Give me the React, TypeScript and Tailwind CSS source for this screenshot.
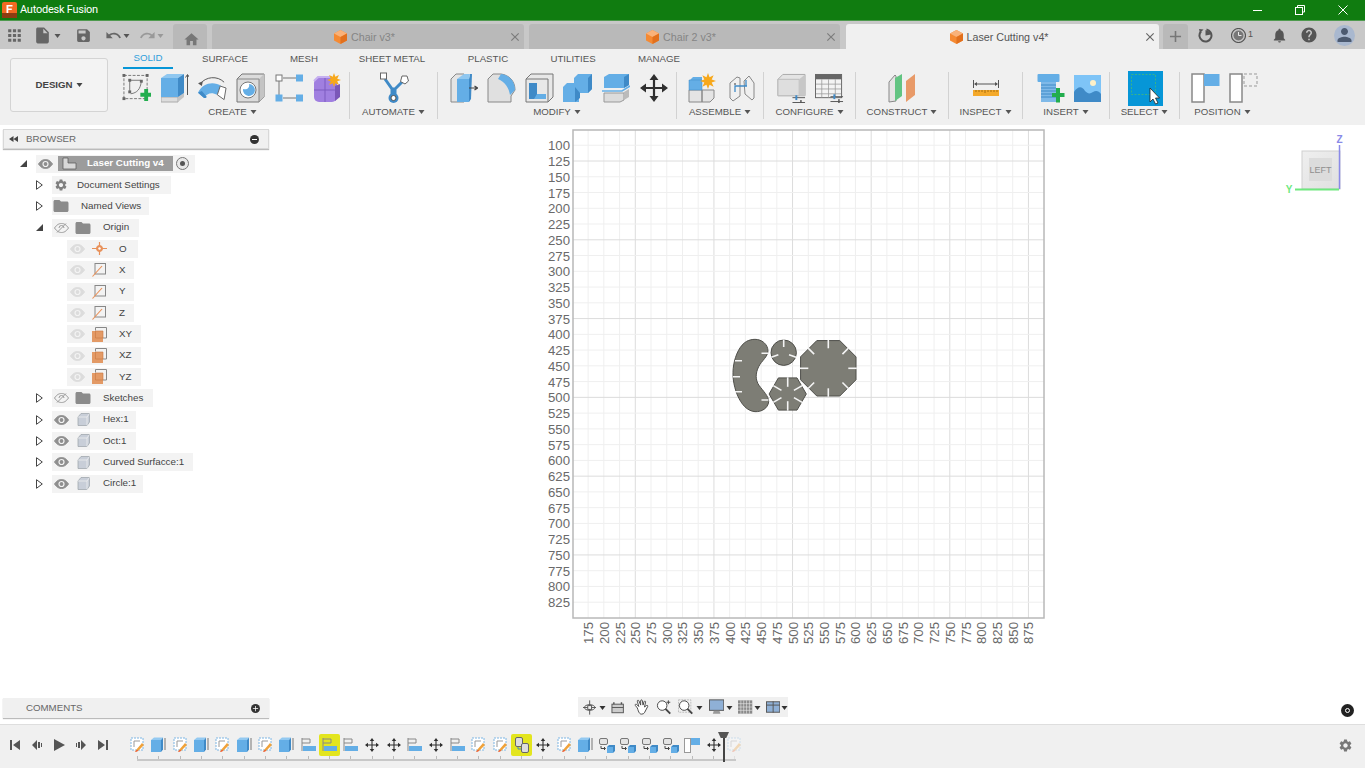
import React from 'react';
import {
  MdApps, MdInsertDriveFile, MdSave, MdUndo, MdRedo, MdHome, MdClose, MdAdd, MdNotifications,
  MdHelp, MdSettings, MdFolder, MdPerson,
} from 'react-icons/md';

const BLUE = '#64aee6';
const DARK = '#3f8ac7';
const FONT = "font-['Liberation_Sans',Arial,sans-serif]";

function Caret({ color = '#555' }: { color?: string }) {
  return (
    <svg width="7" height="4" viewBox="0 0 7 4" className="inline-block">
      <path d="M0.5 0h6L3.5 4z" fill={color} />
    </svg>
  );
}

/* ---------- ribbon icons ---------- */

function SketchIcon() {
  return (
    <svg width="30" height="32" viewBox="0 0 30 32">
      <rect x="2" y="3" width="24" height="24" fill="none" stroke="#777" strokeDasharray="3 1.5" />
      <path d="M8 8v11h0M8 8h11M9 22C16 21 19 17 20 9" fill="none" stroke="#777" />
      {[[2, 3], [26, 3], [2, 27], [20, 9], [8, 8], [8, 20]].map(([x, y]) => (
        <rect key={`${x}-${y}`} x={x - 1.5} y={y - 1.5} width="3" height="3" fill="#666" />
      ))}
      <path d="M19 21h4v-4h4v4h3.5v4H27v4.5h-4V25h-4z" fill="#22ad4e" />
    </svg>
  );
}
function ExtrudeIcon() {
  return (
    <svg width="28" height="30" viewBox="0 0 28 30">
      <path d="M0 24h17v5H0z" fill="#ddd" stroke="#aaa" />
      <path d="M17 24l6-4v4l-6 5z" fill="#c4c4c4" />
      <path d="M0 5h17v19H0z" fill={BLUE} />
      <path d="M0 5l6-4h17l-6 4z" fill="#8fc7f0" />
      <path d="M17 5l6-4v19l-6 4z" fill={DARK} />
      <path d="M26.5 22V2M24.5 4.5l2-3 2 3" fill="none" stroke="#555" />
    </svg>
  );
}
function RevolveIcon() {
  return (
    <svg width="30" height="30" viewBox="0 0 30 30">
      <path d="M2 11C8 3 20 2 27 9" fill="none" stroke="#555" />
      <path d="M0 10l5-2-1 5z" fill="#555" />
      <path d="M0 20C5 9 17 8 24 13l-4 9C14 19 10 20 6 25z" fill={BLUE} />
      <path d="M0 20l6 5c1 1 3 0 3-1l-5-6z" fill={DARK} />
      <path d="M23 13l6 2-2 12-7-5z" fill="#fff" stroke="#666" />
    </svg>
  );
}
function HoleIcon() {
  return (
    <svg width="29" height="30" viewBox="0 0 29 30">
      <path d="M1 6l5-5h22v23l-5 5H1z" fill="#dcdcdc" stroke="#777" />
      <path d="M23 6l5-5v23l-5 5z" fill="#c4c4c4" />
      <path d="M1 6h22v23" fill="none" stroke="#888" />
      <circle cx="12" cy="17" r="8" fill="#fff" stroke="#777" />
      <path d="M7 16a6 6 0 1 0 6-5c1 4-2 6-6 5z" fill={BLUE} />
    </svg>
  );
}
function BoxIcon() {
  return (
    <svg width="28" height="30" viewBox="0 0 28 30">
      <path d="M8 5h13M8 25h13M4 8v14" stroke="#777" />
      <rect x="1" y="2" width="6" height="6" fill="#fff" stroke="#777" />
      <rect x="21" y="1.5" width="7" height="7" fill={BLUE} />
      <rect x="0.5" y="21.5" width="7" height="7" fill={BLUE} />
      <rect x="21" y="21.5" width="7" height="7" fill={BLUE} />
    </svg>
  );
}
function Star({ x, y, r = 7 }: { x: number; y: number; r?: number }) {
  const pts = Array.from({ length: 16 }, (_, i) => {
    const a = (i * Math.PI) / 8;
    const d = i % 2 ? r * 0.5 : r;
    return `${x + d * Math.cos(a)},${y + d * Math.sin(a)}`;
  }).join(' ');
  return <polygon points={pts} fill="#f7a81b" />;
}
function PurpleIcon() {
  return (
    <svg width="28" height="30" viewBox="0 0 28 30">
      <rect x="1" y="5" width="23" height="24" rx="5" fill="#a07fe0" />
      <path d="M1 17h23M12 5v24" stroke="#7d5cc0" />
      <path d="M1 8l4-4h14" fill="none" stroke="#c6b0f0" strokeWidth="2" />
      <path d="M22 13l5-2v13l-5 4z" fill="#7a57b8" />
      <Star x={21} y={7} />
    </svg>
  );
}
function AutomateIcon() {
  return (
    <svg width="30" height="32" viewBox="0 0 30 32">
      <path d="M6 7l7 10v7M24 9l-8 8v7M13 17h3" fill="none" stroke={DARK} strokeWidth="3" />
      <rect x="1.5" y="1" width="6" height="6" fill="#fff" stroke="#666" />
      <path d="M23 4l5 0 1.5 5-3.5 3-4.5-2.5z" fill="#fff" stroke="#666" />
      <circle cx="14.5" cy="26" r="5" fill={DARK} />
      <circle cx="14.5" cy="26" r="2.5" fill="#fff" stroke="#555" />
    </svg>
  );
}
function PressPullIcon() {
  return (
    <svg width="28" height="30" viewBox="0 0 28 30">
      <path d="M1 29V6l5-5h8v28z" fill="#e4e4e4" stroke="#888" />
      <path d="M7 6h13l-1 23H7z" fill={BLUE} />
      <path d="M20 1l-1 5v23l2-3 1-25z" fill={DARK} />
      <path d="M7 6l7-5h6l-1 5z" fill="#8fc7f0" />
      <path d="M19 15h8M24.5 13l3 2-3 2" fill="none" stroke="#444" strokeWidth="1.2" />
    </svg>
  );
}
function FilletIcon() {
  return (
    <svg width="29" height="30" viewBox="0 0 29 30">
      <path d="M1 29V6l5-5h8c8 1 14 7 14 16l-4 6v6z" fill="#e0e0e0" stroke="#888" />
      <path d="M14 1c8 1 14 7 14 16l-5 5C22 15 18 9 11 6z" fill={BLUE} />
    </svg>
  );
}
function ChamferIcon() {
  return (
    <svg width="29" height="30" viewBox="0 0 29 30">
      <path d="M1 6l5-5h22v23l-5 5H1z" fill="#e8e8e8" stroke="#777" />
      <path d="M1 6h22v23" fill="none" stroke="#777" />
      <path d="M4 10h8v11h9v5H4z" fill={DARK} />
      <path d="M12 21l-3 5h12v-5z" fill={BLUE} />
    </svg>
  );
}
function CombineIcon() {
  return (
    <svg width="29" height="30" viewBox="0 0 29 30">
      <path d="M0 14l4-4h12v19H0z" fill={BLUE} />
      <path d="M11 5l4-4h14v15l-4 4H11z" fill={BLUE} />
      <path d="M25 5l4-4v15l-4 4z" fill={DARK} />
      <path d="M12 14v15l5-4v-5" fill={DARK} />
    </svg>
  );
}
function SplitIcon() {
  return (
    <svg width="28" height="30" viewBox="0 0 28 30">
      <path d="M2 4l5-3h20v11l-5 3H2z" fill={BLUE} />
      <path d="M22 4l5-3v11l-5 3z" fill={DARK} />
      <path d="M0 18h20l8-5" fill="none" stroke={BLUE} strokeWidth="1.5" />
      <path d="M2 20h20v7l-4 2H2z" fill="#dcdcdc" stroke="#999" />
      <path d="M22 19l5-3v8l-5 3z" fill="#bbb" />
    </svg>
  );
}
function MoveIcon({ size = 28, color = '#2f2f2f' }: { size?: number; color?: string }) {
  return (
    <svg width={size} height={size} viewBox="0 0 28 28">
      <path d="M14 4v20M4 14h20" stroke={color} strokeWidth="2.2" />
      <path d="M14 0l4.5 6h-9zM14 28l4.5-6h-9zM0 14l6-4.5v9zM28 14l-6-4.5v9z" fill={color} />
    </svg>
  );
}
function NewComponentIcon() {
  return (
    <svg width="28" height="30" viewBox="0 0 28 30">
      <path d="M1 17h13v12H1zM14 17h12v8l-4 4h-8z" fill="#e4e4e4" stroke="#888" />
      <path d="M1 8l4-4h9v13H1z" fill={BLUE} />
      <path d="M1 7h13v10H1z" fill={BLUE} stroke={DARK} strokeWidth="0.5" />
      <Star x={20} y={8} r={8} />
    </svg>
  );
}
function JointIcon() {
  return (
    <svg width="26" height="28" viewBox="0 0 26 28">
      <path d="M1 9l7-6 3 1v18l-7 5-3-3z" fill="#f0f0f0" stroke="#888" />
      <path d="M15 7l5-5 5 7v15l-2 2-7-6z" fill="#f0f0f0" stroke="#888" />
      <path d="M6 18v-6h12M17 6v6" fill="none" stroke={DARK} strokeWidth="1.3" />
      <circle cx="6" cy="10" r="1" fill="#777" />
    </svg>
  );
}
function ParamSlider() {
  return (
    <g stroke="#555">
      <path d="M0 0h13M0 5h13" />
      <rect x="3" y="-2.5" width="2" height="5" fill={DARK} stroke="none" />
      <rect x="8" y="2.5" width="1.5" height="5" fill="#555" stroke="none" />
    </g>
  );
}
function ConfigIcon() {
  return (
    <svg width="30" height="30" viewBox="0 0 30 30">
      <path d="M1 6l5-5h23v22H1z" fill="#e4e4e4" stroke="#aaa" />
      <path d="M1 6h22v17H1z" fill="#dedede" stroke="#bbb" />
      <path d="M23 6l6-5v22h-6z" fill="#c7c7c7" />
      <g transform="translate(16 25)"><ParamSlider /></g>
    </svg>
  );
}
function TableIcon() {
  return (
    <svg width="30" height="30" viewBox="0 0 30 30">
      <rect x="0.5" y="1" width="27" height="24" fill="#f4f4f4" stroke="#666" />
      <rect x="0.5" y="1" width="27" height="5" fill="#666" />
      <path d="M1 11h26M1 16h26M1 21h26M7 6v19M14 6v19M21 6v19" stroke="#999" strokeWidth="0.8" />
      <g transform="translate(16 24)"><ParamSlider /></g>
    </svg>
  );
}
function ConstructIcon() {
  return (
    <svg width="28" height="30" viewBox="0 0 28 30">
      <path d="M1 9l6-7 1 1v25l-7 1z" fill="#e4e4e4" stroke="#888" />
      <path d="M7 5l7-4v22l-7 5z" fill="#62c482" />
      <path d="M18 8l9-7v21l-9 7z" fill="#e89a68" />
    </svg>
  );
}
function RulerIcon() {
  return (
    <svg width="26" height="16" viewBox="0 0 26 16">
      <path d="M0.5 0v8M25.5 0v8M2 4h22" stroke="#555" fill="none" />
      <path d="M1 4l3-2v4zM25 4l-3-2v4z" fill="#555" />
      <rect x="0" y="10" width="26" height="6" fill="#f4a92a" />
      <path d="M3 10v2M6 10v2M9 10v2M12 10v3M15 10v2M18 10v2M21 10v2M24 10v2" stroke="#a66d0d" />
    </svg>
  );
}
function BoltIcon() {
  return (
    <svg width="28" height="30" viewBox="0 0 28 30">
      <rect x="0.5" y="1" width="22" height="8" rx="1" fill={BLUE} />
      <rect x="4" y="9" width="15" height="20" fill="#7fb9e8" />
      <path d="M4 12h15M4 15h15M4 18h15M4 21h15M4 24h15" stroke={DARK} />
      <path d="M15 20h4v-5h4v5h4.5v4H23v5.5h-4V24h-4z" fill="#22ad4e" />
    </svg>
  );
}
function PictureIcon() {
  return (
    <svg width="27" height="27" viewBox="0 0 27 27">
      <rect width="27" height="27" fill="#7ec4f7" />
      <circle cx="19" cy="8" r="3" fill="#fdf0c8" />
      <path d="M0 27V17c4-6 8-6 11-1 3 3 5 3 8 1 3-2 6-1 8 2v8z" fill="#3f8ac7" />
    </svg>
  );
}
function SelectIcon() {
  return (
    <svg width="35" height="35" viewBox="0 0 35 35">
      <rect width="35" height="35" fill="#0696d7" />
      <rect x="3.5" y="3.5" width="24" height="20" fill="none" stroke="#37b38a" strokeDasharray="2 1.5" />
      <path d="M22 17v14l3-3 2.5 5 2.5-1-2.5-5h4z" fill="#fff" stroke="#222" strokeWidth="0.8" />
    </svg>
  );
}
function PositionIcon() {
  return (
    <svg width="29" height="30" viewBox="0 0 29 30">
      <rect x="1" y="1" width="12" height="28" fill="#fff" stroke="#888" strokeWidth="1.5" />
      <rect x="13" y="1" width="15.5" height="12" fill={BLUE} />
    </svg>
  );
}
function CaptureIcon() {
  return (
    <svg width="29" height="30" viewBox="0 0 29 30">
      <rect x="1" y="1" width="12" height="28" fill="#fff" stroke="#888" strokeWidth="1.5" />
      <rect x="15" y="1" width="13" height="12" fill="none" stroke="#999" strokeDasharray="3 2" />
    </svg>
  );
}

function Group({
  label, width, row, children, noBorder,
}: {
  label: string;
  width: number;
  row: string;
  children: React.ReactNode;
  noBorder?: boolean;
}) {
  return (
    <div
      className={`flex flex-col h-[47px] ${noBorder ? '' : 'border-r border-[#d2d2d2]'}`}
      style={{ width }}
    >
      <div className={`flex items-center h-[32px] shrink-0 ${row}`}>{children}</div>
      <div className="flex items-center justify-center gap-[3px] h-[14px] mt-[1px] text-[9.7px] text-[#555]">
        {label}<Caret />
      </div>
    </div>
  );
}

const Cell = ({ children }: { children: React.ReactNode }) => (
  <div className="w-[29px] flex justify-center">{children}</div>
);

/* ---------- title + tabs ---------- */

function TitleBar() {
  return (
    <div className="h-[21px] bg-[#107c10] border-b border-[#4e9a4e] flex items-center text-white">
      <svg width="15" height="16" viewBox="0 0 15 16" className="ml-[2px]">
        <rect width="15" height="16" rx="2" fill="#f26a21" />
        <rect y="11" width="15" height="5" fill="#8c3d12" />
        <path d="M4.5 3h6v1.5H6.3V6.5h3.5V8H6.3v3H4.5z" fill="#fff" />
      </svg>
      <span className="ml-[3px] font-['Roboto',sans-serif] text-[11px] tracking-[-0.25px]">Autodesk Fusion</span>
      <div className="ml-auto flex items-center h-full">
        <div className="w-[44px] flex justify-center">
          <div className="w-[9px] h-[1px] bg-white" />
        </div>
        <div className="w-[42px] flex justify-center">
          <svg width="10" height="10" viewBox="0 0 10 10" fill="none" stroke="#fff">
            <path d="M2.5 2.5V.5h7v6.5H7.5" />
            <rect x="0.5" y="2.5" width="7" height="7" />
          </svg>
        </div>
        <div className="w-[44px] flex justify-center">
          <svg width="10" height="10" viewBox="0 0 10 10" stroke="#fff">
            <path d="M0.5.5l9 9M9.5.5l-9 9" />
          </svg>
        </div>
      </div>
    </div>
  );
}

function CubeLogo() {
  return (
    <svg width="13" height="14" viewBox="0 0 13 14">
      <path d="M6.5 0L13 3.5v7L6.5 14 0 10.5v-7z" fill="#f58a33" />
      <path d="M6.5 0L13 3.5 6.5 7 0 3.5z" fill="#f9b27a" />
      <path d="M6.5 7L13 3.5v7L6.5 14z" fill="#e2701d" />
    </svg>
  );
}

function DocTab({ name, active, width, marginLeft }: {
  name: string;
  active?: boolean;
  width: number;
  marginLeft: number;
}) {
  return (
    <div
      className={`relative h-[25px] pr-[7px] pt-[1px] rounded-t-[3px] flex items-center justify-center gap-[4px] text-[10.7px] ${
        active ? 'bg-[#f0f0f0] text-[#555]' : 'bg-[#b9b9b9] text-[#858585]'
      }`}
      style={{ width, marginLeft }}
    >
      <CubeLogo />
      <span>{name}</span>
      <MdClose size={14} color={active ? '#666' : '#7c7c7c'} className="absolute right-[2px] top-[6px]" />
    </div>
  );
}

function SyncIcon() {
  return (
    <svg width="15" height="15" viewBox="0 0 15 15">
      <path d="M3 3.5A6 6 0 1 0 8.5 1.6" fill="none" stroke="#555" strokeWidth="2" />
      <path d="M7.5 7.5V2l4 1.5 1.500 3z" fill="#555" />
      <path d="M1 1l4.500.5L2 5z" fill="#555" />
    </svg>
  );
}

function ClockIcon() {
  return (
    <svg width="15" height="15" viewBox="0 0 15 15">
      <circle cx="7.5" cy="7.5" r="7" fill="#c8c8c8" stroke="#555" strokeWidth="1.2" />
      <circle cx="7.5" cy="7.5" r="5" fill="#777" />
      <path d="M7.5 4v3.5h3" fill="none" stroke="#e8e8e8" />
    </svg>
  );
}

function TabRow() {
  return (
    <div className="h-[28px] bg-[#c8c8c8] flex items-end text-[#666]">
      <div className="h-[28px] w-[173px] relative flex items-center">
        <MdApps size={19} className="ml-[5px]" />
        <MdInsertDriveFile size={19} className="ml-[9px]" />
        <span className="ml-[2px]"><Caret /></span>
        <MdSave size={17} className="ml-[14px]" />
        <MdUndo size={17} className="ml-[13px]" />
        <span className="ml-[1px]"><Caret /></span>
        <MdRedo size={17} color="#999" className="ml-[9px]" />
        <span className="ml-[1px]"><Caret color="#999" /></span>
      </div>
      <div className="h-[25px] w-[34px] pl-[3px] bg-[#b9b9b9] rounded-t-[3px] flex items-end justify-center pb-[1px]">
        <MdHome size={17} color="#777" />
      </div>
      <DocTab name="Chair v3*" width={312} marginLeft={5} />
      <DocTab name="Chair 2 v3*" width={311} marginLeft={5} />
      <DocTab name="Laser Cutting v4*" active width={313} marginLeft={6} />
      <div className="h-[25px] w-[25px] ml-[4px] bg-[#b9b9b9] rounded-t-[3px] flex items-center justify-center">
        <MdAdd size={19} color="#777" />
      </div>
      <div className="flex items-center h-[28px] flex-1 text-[#555]">
        <div className="ml-[10px]"><SyncIcon /></div>
        <div className="ml-[18px]"><ClockIcon /></div>
        <span className="text-[9px] ml-[2px]">1</span>
        <MdNotifications size={17} className="ml-[18px]" />
        <MdHelp size={18} className="ml-[12px]" />
        <div className="ml-[16px] w-[21px] h-[21px] rounded-full bg-[#a9b8cf] overflow-hidden flex items-center justify-center">
          <MdPerson size={24} color="#4c5a70" />
        </div>
      </div>
    </div>
  );
}

function Ribbon() {
  const tabs: [string, number][] = [
    ['SURFACE', 104], ['MESH', 54], ['SHEET METAL', 122], ['PLASTIC', 70], ['UTILITIES', 100], ['MANAGE', 72],
  ];
  return (
    <div className="h-[76px] bg-[#f0f0f0] flex">
      <div className="w-[116px] pl-[10px] pt-[9px]">
        <button className="w-[98px] h-[54px] rounded-[3px] border border-[#d4d4d4] bg-[#f3f3f3] flex items-center justify-center gap-[3px] text-[9.7px] font-bold text-[#444]">
          DESIGN<Caret color="#444" />
        </button>
      </div>
      <div className="flex flex-col">
        <div className="h-[23px] flex pl-[7px] text-[9.7px] text-[#555]">
          <div className="w-[50px] h-[20px] flex items-center justify-center text-[#2f9fdc] border-b-2 border-[#0696d7]">SOLID</div>
          {tabs.map(([t, w]) => (
            <div key={t} className="h-[20px] flex items-center justify-center" style={{ width: w }}>{t}</div>
          ))}
        </div>
        <div className="flex">
          <Group label="CREATE" width={234} row="pl-[6px] gap-[9px] self-start">
            <Cell><SketchIcon /></Cell>
            <Cell><ExtrudeIcon /></Cell>
            <Cell><RevolveIcon /></Cell>
            <Cell><HoleIcon /></Cell>
            <Cell><BoxIcon /></Cell>
            <Cell><PurpleIcon /></Cell>
          </Group>
          <Group label="AUTOMATE" width={88} row="justify-center">
            <AutomateIcon />
          </Group>
          <Group label="MODIFY" width={239} row="pl-[11px] gap-[9px] self-start">
            <Cell><PressPullIcon /></Cell>
            <Cell><FilletIcon /></Cell>
            <Cell><ChamferIcon /></Cell>
            <Cell><CombineIcon /></Cell>
            <Cell><SplitIcon /></Cell>
            <Cell><MoveIcon /></Cell>
          </Group>
          <Group label="ASSEMBLE" width={87} row="pl-[10px] gap-[11px] self-start">
            <Cell><NewComponentIcon /></Cell>
            <Cell><JointIcon /></Cell>
          </Group>
          <Group label="CONFIGURE" width={92} row="pl-[13px] gap-[9px] self-start">
            <Cell><ConfigIcon /></Cell>
            <Cell><TableIcon /></Cell>
          </Group>
          <Group label="CONSTRUCT" width={93} row="justify-center">
            <ConstructIcon />
          </Group>
          <Group label="INSPECT" width={74} row="justify-center">
            <RulerIcon />
          </Group>
          <Group label="INSERT" width={87} row="pl-[13px] gap-[8px] self-start">
            <Cell><BoltIcon /></Cell>
            <Cell><PictureIcon /></Cell>
          </Group>
          <Group label="SELECT" width={70} row="justify-center pl-[2px]">
            <SelectIcon />
          </Group>
          <Group label="POSITION" width={85} row="pl-[11px] gap-[9px] self-start" noBorder>
            <Cell><PositionIcon /></Cell>
            <Cell><CaptureIcon /></Cell>
          </Group>
        </div>
      </div>
    </div>
  );
}

/* ---------- browser tree ---------- */

function Eye({ color = '#8f8f8f', off }: { color?: string; off?: boolean }) {
  return (
    <svg width="15" height="10" viewBox="0 0 15 10">
      <path d="M0.5 5C3 1.5 5 .5 7.5.5S12 1.5 14.5 5C12 8.5 10 9.5 7.5 9.5S3 8.5.5 5z" fill={off ? 'none' : color} stroke={color} />
      {off ? (
        <path d="M3 9.5L12 .5M5 5a2.5 2.5 0 0 1 5 0" fill="none" stroke={color} />
      ) : (
        <circle cx="7.5" cy="5" r="2.5" fill={color} stroke="#f3f3f3" strokeWidth="1.2" />
      )}
    </svg>
  );
}
function BodyCube() {
  return (
    <svg width="13" height="13" viewBox="0 0 13 13">
      <path d="M1 4l3-3.5h8.5V9L10 12.5H1z" fill="#c8ced8" stroke="#9aa0a8" strokeWidth="0.7" />
      <path d="M1 4h9v8.5M10 4l2.5-3.5" fill="none" stroke="#f4f4f4" strokeWidth="0.7" />
    </svg>
  );
}
function OriginPt() {
  return (
    <svg width="15" height="13" viewBox="0 0 15 13">
      <path d="M0 6.5h15M7.5 0v13" stroke="#e8915a" strokeWidth="1.2" />
      <circle cx="7.5" cy="6.5" r="3" fill="#e8915a" stroke="#e8915a" />
      <circle cx="7.5" cy="6.5" r="1.2" fill="#fff" />
    </svg>
  );
}
function AxisIcon() {
  return (
    <svg width="14" height="14" viewBox="0 0 14 14">
      <rect x="3" y="0.5" width="10.5" height="10.5" fill="none" stroke="#888" />
      <path d="M0.5 13.5L10 3" stroke="#ea8f55" strokeWidth="1.1" />
    </svg>
  );
}
function PlaneIcon() {
  return (
    <svg width="15" height="15" viewBox="0 0 15 15">
      <rect x="0" y="4" width="11" height="11" fill="#e39a66" />
      <path d="M3.5 3.5V.5H14.5V11H11" fill="none" stroke="#888" />
      <path d="M3.5 4v7H11V4z" fill="none" stroke="#c9773f" strokeWidth="0.6" />
    </svg>
  );
}
function RootDoc() {
  return (
    <svg width="15" height="13" viewBox="0 0 15 13">
      <path d="M1 1h5v5h8v6H1z" fill="#d8d8d8" stroke="#555" strokeWidth="0.7" />
    </svg>
  );
}
const Folder = () => <MdFolder size={18} color="#8b8b8b" />;

type TreeRow = {
  level: 1 | 2;
  open?: boolean;
  eye?: 'on' | 'off' | 'faint';
  icon: React.ReactNode;
  label: string;
  width: number;
  noEyePad?: number;
};

const rows: TreeRow[] = [
  { level: 1, icon: <MdSettings size={14} color="#7f7f7f" />, label: 'Document Settings', width: 119, noEyePad: 25 },
  { level: 1, icon: <Folder />, label: 'Named Views', width: 97, noEyePad: 29 },
  { level: 1, open: true, eye: 'off', icon: <Folder />, label: 'Origin', width: 87 },
  { level: 2, eye: 'faint', icon: <OriginPt />, label: 'O', width: 71 },
  { level: 2, eye: 'faint', icon: <AxisIcon />, label: 'X', width: 67 },
  { level: 2, eye: 'faint', icon: <AxisIcon />, label: 'Y', width: 67 },
  { level: 2, eye: 'faint', icon: <AxisIcon />, label: 'Z', width: 67 },
  { level: 2, eye: 'faint', icon: <PlaneIcon />, label: 'XY', width: 74 },
  { level: 2, eye: 'faint', icon: <PlaneIcon />, label: 'XZ', width: 74 },
  { level: 2, eye: 'faint', icon: <PlaneIcon />, label: 'YZ', width: 74 },
  { level: 1, eye: 'off', icon: <Folder />, label: 'Sketches', width: 101 },
  { level: 1, eye: 'on', icon: <BodyCube />, label: 'Hex:1', width: 84 },
  { level: 1, eye: 'on', icon: <BodyCube />, label: 'Oct:1', width: 84 },
  { level: 1, eye: 'on', icon: <BodyCube />, label: 'Curved Surfacce:1', width: 141 },
  { level: 1, eye: 'on', icon: <BodyCube />, label: 'Circle:1', width: 91 },
];

function Arrow({ open }: { open?: boolean }) {
  return open ? (
    <svg width="7" height="7" viewBox="0 0 7 7"><path d="M7 0v7H0z" fill="#444" /></svg>
  ) : (
    <svg width="7" height="10" viewBox="0 0 7 10"><path d="M.5.7L6.3 5 .5 9.3z" fill="#fff" stroke="#444" /></svg>
  );
}

function Row({ row }: { row: TreeRow }) {
  const eye =
    row.eye === 'on' ? <Eye /> : row.eye === 'off' ? <Eye off color="#9a9a9a" /> : <Eye color="#dcdcdc" />;
  return (
    <div className={`h-[21.33px] flex items-center ${row.level === 1 ? 'pl-[34px]' : 'pl-[67px]'}`}>
      {row.level === 1 && (
        <div className="w-[10px] mr-[8px] flex justify-center"><Arrow open={row.open} /></div>
      )}
      <div className="h-[18px] bg-[#f3f3f3] flex items-center text-[9.8px] text-[#444]" style={{ width: row.width }}>
        {row.noEyePad ? (
          <>
            <div className="w-[18px] flex justify-center">{row.icon}</div>
            <span style={{ marginLeft: row.noEyePad - 18 }}>{row.label}</span>
          </>
        ) : row.level === 1 ? (
          <>
            <div className="w-[18px] flex justify-center">{eye}</div>
            <div className="w-[26px] flex justify-center">{row.icon}</div>
            <span className="ml-[7px]">{row.label}</span>
          </>
        ) : (
          <>
            <div className="w-[20px] flex justify-center">{eye}</div>
            <div className="w-[24px] flex justify-center">{row.icon}</div>
            <span className="ml-[8px]">{row.label}</span>
          </>
        )}
      </div>
    </div>
  );
}

function Sidebar() {
  return (
    <div className="w-[273px] shrink-0 flex flex-col pl-[3px] pr-[4px]">
      <div className="mt-[4px] h-[20px] bg-[#f0f0f0] border border-[#d8d8d8] shadow-[0_1px_1px_#bbb] flex items-center text-[9.7px] text-[#666]">
        <svg width="9" height="6" viewBox="0 0 9 6" className="ml-[5px]"><path d="M4.5 0v6L0 3zM9 0v6L4.5 3z" fill="#444" /></svg>
        <span className="ml-[8px]">BROWSER</span>
        <div className="ml-auto mr-[9px] w-[9px] h-[9px] rounded-full bg-[#333] flex items-center justify-center">
          <div className="w-[5px] h-[1px] bg-white" />
        </div>
      </div>
      <div className="-ml-[3px] mt-[4px] text-[#444]">
        <div className="h-[21.33px] flex items-center pl-[18px]">
          <div className="w-[10px] mr-[8px] flex justify-center"><Arrow open /></div>
          <div className="h-[18px] w-[159px] bg-[#f3f3f3] flex items-center">
            <div className="w-[18px] flex justify-center"><Eye /></div>
            <div className="ml-[4px] h-[15px] w-[115px] bg-[#9c9c9c] flex items-center">
              <div className="ml-[2px] w-[18px] flex justify-center"><RootDoc /></div>
              <span className="ml-[9px] text-[9.8px] font-bold text-white">Laser Cutting v4</span>
            </div>
            <div className="ml-[3px] w-[13px] h-[13px] rounded-full bg-[#e8e8e8] border border-[#777] flex items-center justify-center">
              <div className="w-[5px] h-[5px] rounded-full bg-[#555]" />
            </div>
          </div>
        </div>
        {rows.map((r) => <Row key={r.label} row={r} />)}
      </div>
      <div className="mt-auto mb-[6px] h-[20px] bg-[#f0f0f0] shadow-[0_1px_1px_#bbb] flex items-center text-[9.7px] text-[#666]">
        <span className="ml-[23px]">COMMENTS</span>
        <div className="ml-auto mr-[9px] w-[9px] h-[9px] rounded-full bg-[#333] flex items-center justify-center">
          <MdAdd size={9} color="#fff" />
        </div>
      </div>
    </div>
  );
}

/* ---------- sheet in the viewport ---------- */

const xAt = (u: number) => 635.3 + (u - 250) * 0.629;
const yAt = (u: number) => 161 + (u - 125) * 0.6303;
const range = (a: number, b: number) => {
  const out: number[] = [];
  for (let u = a; u <= b; u += 25) out.push(u);
  return out;
};

function polygon(cx: number, cy: number, r: number, n: number, start: number) {
  return Array.from({ length: n }, (_, i) => {
    const a = start + (i * 2 * Math.PI) / n;
    return `${cx + r * Math.cos(a)},${cy + r * Math.sin(a)}`;
  }).join(' ');
}

function Slots({ cx, cy, r, len, angles }: { cx: number; cy: number; r: number; len: number; angles: number[] }) {
  return (
    <g stroke="#f4f4f4" strokeWidth="1.6">
      {angles.map((deg) => {
        const a = (deg * Math.PI) / 180;
        return (
          <line
            key={deg}
            x1={cx + (r + 0.5) * Math.cos(a)}
            y1={cy + (r + 0.5) * Math.sin(a)}
            x2={cx + (r - len) * Math.cos(a)}
            y2={cy + (r - len) * Math.sin(a)}
          />
        );
      })}
    </g>
  );
}

function Sheet() {
  const fill = '#7d7d75';
  const edge = '#4f4f4a';
  return (
    <svg width="1092" height="599" viewBox="273 125 1092 599" className="absolute left-0 top-0">
      <g stroke="#efefef">
        {range(175, 875).map((u) => <line key={u} x1={xAt(u)} x2={xAt(u)} y1="130" y2="618" stroke={u % 125 === 0 ? '#dcdcdc' : undefined} />)}
        {range(100, 825).map((u) => <line key={u} y1={yAt(u)} y2={yAt(u)} x1="573" x2="1044" stroke={u % 125 === 0 ? '#dcdcdc' : undefined} />)}
      </g>
      <rect x="573" y="130" width="471" height="488" fill="none" stroke="#b8b8b8" strokeWidth="1.5" />
      <g fontFamily="'Liberation Sans', Arial, sans-serif" fontSize="13.2" fill="#6a6a6a">
        {range(100, 825).map((u) => <text key={u} x="570" y={yAt(u) + 5} textAnchor="end">{u}</text>)}
        {range(175, 875).map((u) => (
          <text key={u} transform={`translate(${xAt(u) + 5} 622) rotate(-90)`} textAnchor="end">{u}</text>
        ))}
      </g>

      <path
        transform="translate(720 330) scale(0.3333)"
        d="M105 28C125 28 143 42 144 62C144 80 125 92 116 110C106 130 106 150 117 166C130 184 146 198 146 215C144 235 125 246 105 245C82 243 65 225 52 195C40 165 36 135 41 105C46 75 60 45 80 34C88 30 96 28 105 28Z"
        fill={fill}
        stroke={edge}
        strokeWidth="3"
      />
      <g stroke="#f4f4f4" strokeWidth="1.6" transform="translate(720 330)">
        <path d="M41.5 23.3h7M15 30.7h7M13 46.7h7M15 61.7h7M41.5 70h7" />
      </g>

      <circle cx="783.7" cy="352.7" r="12.7" fill={fill} stroke={edge} />
      <Slots cx={783.7} cy={352.7} r={12.7} len={7} angles={[-90, 20, 160]} />

      <polygon points={polygon(787.7, 394, 18.6, 6, 0)} fill={fill} stroke={edge} />
      <Slots cx={787.7} cy={394} r={16.2} len={9} angles={[-90, -30, 30, 90, 150, 210]} />

      <polygon points={polygon(828.3, 368.3, 30, 8, Math.PI / 8)} fill={fill} stroke={edge} />
      <Slots cx={828.3} cy={368.3} r={28} len={8} angles={[0, 45, 90, 135, 180, 225, 270, 315]} />
    </svg>
  );
}

function ViewCube() {
  return (
    <svg width="60" height="64" viewBox="0 0 60 64" className="absolute left-[1012px] top-[10px]">
      <defs>
        <linearGradient id="cubeFace" x1="0" y1="0" x2="1" y2="1">
          <stop offset="0" stopColor="#efefef" />
          <stop offset="1" stopColor="#e0e0e0" />
        </linearGradient>
      </defs>
      <rect x="17" y="16" width="38" height="38" fill="url(#cubeFace)" stroke="#cfcfcf" />
      <rect x="24" y="23" width="23" height="23" fill="#dcdcdc" />
      <text x="35.5" y="38" textAnchor="middle" fontSize="9" fill="#8f8f8f" fontFamily="'Liberation Sans Narrow','Liberation Sans',sans-serif">LEFT</text>
      <path d="M54.5 10v44" stroke="#8a8ae8" strokeWidth="1.5" />
      <path d="M10 54.5h44" stroke="#6ee87e" strokeWidth="1.8" />
      <text x="54.5" y="8" textAnchor="middle" fontSize="10" fontWeight="bold" fill="#8a8ae8" fontFamily="'Liberation Sans',sans-serif">Z</text>
      <text x="4" y="58" textAnchor="middle" fontSize="10" fontWeight="bold" fill="#6ee87e" fontFamily="'Liberation Sans',sans-serif">Y</text>
    </svg>
  );
}

/* ---------- viewport nav bar ---------- */

function NavBar() {
  return (
    <div className="absolute left-[305px] bottom-[7px] h-[20px] w-[210px] bg-[#f0f0f0] flex items-center text-[#555]">
      <svg width="14" height="15" viewBox="0 0 14 15" className="ml-[5px]" fill="none" stroke="#555">
        <path d="M7 0v15M0 7.5h14" />
        <ellipse cx="7" cy="7.5" rx="5.5" ry="3" />
        <rect x="5" y="5.5" width="4" height="4" fill="#f0f0f0" />
      </svg>
      <span className="ml-[3px]"><Caret color="#333" /></span>
      <svg width="14" height="13" viewBox="0 0 14 13" className="ml-[5px]">
        <rect x="1" y="3" width="12" height="9" fill="#ccc" stroke="#555" />
        <path d="M1 6.5h12" stroke="#555" />
        <path d="M3 3V1M11 3V1" stroke="#555" strokeWidth="1.5" />
      </svg>
      <svg width="16" height="16" viewBox="0 0 16 16" className="ml-[9px]" fill="#fff" stroke="#444">
        <path d="M3.5 9L1.5 6.5c-1-1 .5-2 1.5-1L5 7.5 3.5 2c-.3-1.3 1.3-1.5 1.7-.4L7 6V1.5c0-1.3 1.7-1.3 1.8 0L9.5 6l1-3.500c.4-1.200 2-.8 1.700.4L11 8l2-1.500c1-.8 2 .3 1.300 1.200L11 14c-.8 1-1.500 1.500-3 1.500-2 0-3-1.500-4.500-6.500z" />
      </svg>
      <svg width="16" height="16" viewBox="0 0 16 16" className="ml-[7px]" fill="none" stroke="#444">
        <circle cx="6.5" cy="6.5" r="5" fill="#fff" />
        <path d="M10 10l5 5" strokeWidth="2" />
        <path d="M13 1v4M11 3h4" />
      </svg>
      <svg width="17" height="16" viewBox="0 0 17 16" className="ml-[7px]" fill="none" stroke="#444">
        <rect x="0.5" y="0.5" width="13" height="13" stroke="#bbb" strokeDasharray="2 1" />
        <circle cx="6.5" cy="6.5" r="5" fill="#fff" />
        <path d="M10 10l5 5" strokeWidth="2" />
      </svg>
      <span className="ml-[2px]"><Caret color="#333" /></span>
      <svg width="16" height="16" viewBox="0 0 16 16" className="ml-[6px]">
        <rect x="0.5" y="0.5" width="15" height="11" fill="#8fb0d6" stroke="#555" />
        <path d="M5 12h6l1 3H4z" fill="#999" />
      </svg>
      <span className="ml-[2px]"><Caret color="#333" /></span>
      <svg width="15" height="14" viewBox="0 0 15 14" className="ml-[5px]">
        <rect width="15" height="14" fill="#8a8a8a" />
        <path d="M3 0v14M6 0v14M9 0v14M12 0v14M0 3.500h15M0 7h15M0 10.500h15" stroke="#eee" strokeWidth="0.6" />
      </svg>
      <span className="ml-[1px]"><Caret color="#333" /></span>
      <svg width="15" height="12" viewBox="0 0 15 12" className="ml-[5px]">
        <rect x="0.5" y="0.5" width="14" height="11" fill="#8fb0d6" stroke="#555" />
        <path d="M7.5 0v12M0 4h15" stroke="#555" />
      </svg>
      <span className="ml-[1px]"><Caret color="#333" /></span>
    </div>
  );
}

/* ---------- timeline ---------- */

function MiniSketch() {
  return (
    <svg width="15" height="16" viewBox="0 0 15 16">
      <rect x="1" y="1" width="12" height="12" fill="#fff" stroke="#7db5e3" strokeDasharray="2 1" />
      <path d="M4 4v6M4 4h6" stroke="#999" />
      <path d="M6 13l6-7 2 2-6 6-3 1z" fill="#f0a23a" />
      <path d="M5 15l2-2 1 1z" fill="#e33" />
    </svg>
  );
}
function MiniExtrude() {
  return (
    <svg width="15" height="16" viewBox="0 0 15 16">
      <path d="M0 3h10v12H0z" fill={BLUE} />
      <path d="M0 3l3-2.5h9L10 3z" fill="#93c9f1" />
      <path d="M10 3l2-2.5v12L10 15z" fill={DARK} />
      <path d="M14 13V1" stroke="#777" />
    </svg>
  );
}
function MiniJoint() {
  return (
    <svg width="15" height="14" viewBox="0 0 15 14">
      <path d="M1 0v13M1 1h8v4H1" fill="none" stroke="#888" />
      <rect x="2" y="8" width="13" height="5" fill={BLUE} />
    </svg>
  );
}
function MiniRigid() {
  return (
    <svg width="14" height="16" viewBox="0 0 14 16">
      <rect x="0.5" y="0.5" width="7" height="9" rx="1.5" fill="#ddd" stroke="#666" />
      <rect x="6.5" y="6.5" width="7" height="9" rx="1.5" fill="#ddd" stroke="#666" />
      <path d="M3 10v2h3" fill="none" stroke={DARK} />
    </svg>
  );
}
function MiniLink() {
  return (
    <svg width="16" height="15" viewBox="0 0 16 15">
      <rect x="0.5" y="0.5" width="8" height="6" rx="1.5" fill="#e4e4e4" stroke="#777" />
      <path d="M2 8v2.5h4M5 9l1.5 1.5L5 12" fill="none" stroke="#444" />
      <path d="M8 9h6v6H8z" fill={BLUE} />
      <path d="M14 9l2-2v6l-2 2zM8 9l2-2h6l-2 2z" fill={DARK} />
    </svg>
  );
}
function MiniPosition() {
  return (
    <svg width="16" height="15" viewBox="0 0 16 15">
      <rect x="0.5" y="0.5" width="6" height="14" fill="#fff" stroke="#999" />
      <rect x="7" y="0" width="9" height="7" fill={BLUE} />
    </svg>
  );
}

const feature: [React.ReactNode, boolean?][] = [
  [<MiniSketch />], [<MiniExtrude />], [<MiniSketch />], [<MiniExtrude />], [<MiniSketch />], [<MiniExtrude />],
  [<MiniSketch />], [<MiniExtrude />], [<MiniJoint />], [<MiniJoint />, true], [<MiniJoint />],
  [<MoveIcon size={14} />], [<MoveIcon size={14} />], [<MiniJoint />], [<MoveIcon size={14} />], [<MiniJoint />],
  [<MiniSketch />], [<MiniSketch />], [<MiniRigid />, true], [<MoveIcon size={14} />], [<MiniSketch />],
  [<MiniExtrude />], [<MiniLink />], [<MiniLink />], [<MiniLink />], [<MiniLink />], [<MiniPosition />],
  [<MoveIcon size={14} />],
];

function Timeline() {
  return (
    <div className="h-[44px] bg-[#f0f0f0] border-t border-[#dedede] flex items-start">
      <div className="flex pl-[4px] pt-[14px] w-[127px] shrink-0">
        {[
          'M1 1h2v10H1zM11 1v10L4 6z',
          'M6 1v10L1 6zM7 3h2v6H7zM10 4h1v4h-1z',
          'M1 0l11 6-11 6z',
          'M1 4h1v4H1zM3 3h2v6H3zM6 1l5 5-5 5z',
          'M1 1v10l7-5zM9 1h2v10H9z',
        ].map((d) => (
          <div key={d} className="w-[22px] flex justify-center">
            <svg width="12" height="12" viewBox="0 0 12 12"><path d={d} fill="#555" /></svg>
          </div>
        ))}
      </div>
      <div className="relative">
        <div className="flex pt-[9px]">
          {feature.map(([icon, hit], i) => (
            <div key={i} className="w-[21.33px] flex flex-col items-center">
              <div className={`w-[21px] h-[22px] rounded-[2px] flex items-center justify-center ${hit ? 'bg-[#e3e51e]' : ''}`}>
                {icon}
              </div>
              <div className="w-[1px] h-[3px] bg-[#bbb]" />
            </div>
          ))}
          <div className="w-[21.33px] flex flex-col items-center opacity-30">
            <div className="h-[22px] flex items-center"><MiniSketch /></div>
            <div className="w-[1px] h-[3px] bg-[#bbb]" />
          </div>
        </div>
        <div className="h-[2px] bg-[#c8c8c8] ml-[10px] mr-[10px]" />
        <div className="absolute left-[591px] top-[7px] flex flex-col items-center">
          <div className="w-[11px] h-[6px] bg-[#555] [clip-path:polygon(0_0,100%_0,75%_100%,25%_100%)]" />
          <div className="w-[2px] h-[24px] bg-[#444]" />
        </div>
      </div>
      <div className="ml-auto mr-[12px] mt-[13px]"><MdSettings size={15} color="#777" /></div>
    </div>
  );
}

export default function App() {
  return (
    <div className={`w-[1365px] h-[768px] bg-white flex flex-col overflow-hidden ${FONT}`}>
      <TitleBar />
      <TabRow />
      <Ribbon />
      <div className="flex flex-1 min-h-0">
        <Sidebar />
        <div className="relative flex-1">
          <Sheet />
          <ViewCube />
          <NavBar />
          <div className="absolute right-[11px] bottom-[7px] w-[13px] h-[13px] rounded-full bg-[#222] flex items-center justify-center">
            <div className="w-[5px] h-[5px] rounded-full border border-white" />
          </div>
        </div>
      </div>
      <Timeline />
    </div>
  );
}
